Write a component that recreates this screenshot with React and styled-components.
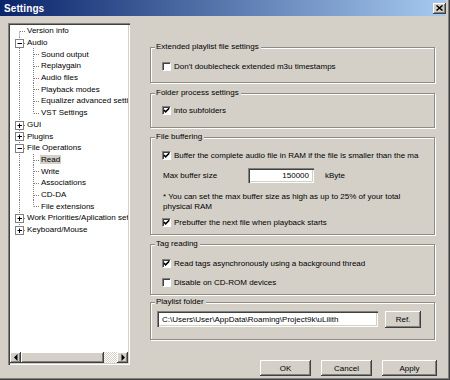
import React from 'react';
import styled, { createGlobalStyle } from 'styled-components';

const FONT = `"Liberation Sans", Arial, sans-serif`;

const Global = createGlobalStyle`
  html, body { margin: 0; padding: 0; background: #d4d0c8; }
  body { font-family: ${FONT}; }
  * { box-sizing: border-box; }
`;

const Window = styled.div`
  width: 450px;
  height: 380px;
  background: #d4d0c8;
  box-shadow: inset -1px -1px 0 #404040, inset -2px -2px 0 #808080;
  display: flex;
  flex-direction: column;
  overflow: hidden;
  font-family: ${FONT};
  font-size: 8px;
  color: #000;
`;

const TitleBar = styled.div`
  height: 16px;
  width: 446px;
  flex: none;
  display: flex;
  align-items: center;
  justify-content: space-between;
  padding: 0 0 0 4px;
  background: linear-gradient(to right, #0a246a, #a6caf0);
`;

const Title = styled.span`
  color: #fff;
  font-weight: bold;
  font-size: 10px;
  letter-spacing: 0.1px;
`;

const CloseBtn = styled.div`
  width: 13px;
  height: 11px;
  background: #d4d0c8;
  box-shadow: inset -1px -1px 0 #404040, inset 1px 1px 0 #fff, inset -2px -2px 0 #808080;
  display: flex;
  align-items: center;
  justify-content: center;
`;

const Body = styled.div`
  flex: 1;
  display: flex;
  padding: 7px 0 0 8px;
`;

const TreeBox = styled.div`
  width: 122px;
  height: 342px;
  flex: none;
  background: #fff;
  padding: 2px;
  box-shadow: inset 1px 1px 0 #808080, inset 2px 2px 0 #404040, inset -1px -1px 0 #fff, inset -2px -2px 0 #d4d0c8;
  display: flex;
  flex-direction: column;
`;

const TreeList = styled.div`
  flex: 1;
  overflow: hidden;
  display: flex;
  flex-direction: column;
`;

const TreeRow = styled.div`
  height: 11.7px;
  display: flex;
  align-items: center;
  white-space: nowrap;
  flex: none;
`;

const TreeLabel = styled.span`
  padding: 0 1px;
  line-height: 9px;
  height: 9px;
  background: ${(p) => (p.$selected ? '#d4d0c8' : 'transparent')};
`;

const HScroll = styled.div`
  height: 11px;
  flex: none;
  display: flex;
`;

const raised = `
  background: #d4d0c8;
  box-shadow: inset -1px -1px 0 #404040, inset 1px 1px 0 #fff, inset -2px -2px 0 #808080;
`;

const ScrollBtn = styled.div`
  width: 11px;
  height: 11px;
  flex: none;
  ${raised}
  display: flex;
  align-items: center;
  justify-content: center;
`;

const Thumb = styled.div`
  width: 83px;
  height: 11px;
  flex: none;
  ${raised}
`;

const Track = styled.div`
  flex: 1;
  background-color: #d4d0c8;
  background-image: conic-gradient(#fff 25%, #d4d0c8 0 50%, #fff 0 75%, #d4d0c8 0);
  background-size: 2px 2px;
`;

const RightCol = styled.div`
  width: 285px;
  margin-left: 20px;
  display: flex;
  flex-direction: column;
`;

const GroupBox = styled.div`
  position: relative;
  height: ${(p) => p.$h}px;
  margin-top: ${(p) => p.$mt}px;
  padding: ${(p) => p.$pt || 0}px 0 0 11px;
  border: 1px solid #8f8c86;
  box-shadow: inset 1px 1px 0 #fff, 1px 1px 0 #fff;
  display: flex;
  flex-direction: column;
  flex: none;
`;

const Legend = styled.span`
  position: absolute;
  top: -6px;
  left: 4px;
  padding: 0 2px 0 1px;
  line-height: 10px;
  background: #d4d0c8;
  white-space: nowrap;
`;

const CheckRow = styled.div`
  display: flex;
  align-items: center;
  gap: 3px;
  height: ${(p) => p.$h || 10}px;
  margin-top: ${(p) => p.$mt || 0}px;
  white-space: nowrap;
  overflow: hidden;
  max-width: 260px;
  flex: none;
`;

const CheckBox = styled.span`
  width: 9px;
  height: 9px;
  flex: none;
  background: #fff;
  border-top: 1px solid #808080;
  border-left: 1px solid #808080;
  border-right: 1px solid #fff;
  border-bottom: 1px solid #fff;
  box-shadow: inset 1px 1px 0 #404040;
  display: flex;
`;

const FieldRow = styled.div`
  display: flex;
  align-items: center;
  height: 15px;
  margin-top: ${(p) => p.$mt || 0}px;
  flex: none;
`;

const FieldLabel = styled.span`
  width: 86px;
  flex: none;
  padding-left: 1px;
`;

const sunken = `
  background: #fff;
  box-shadow: inset 1px 1px 0 #808080, inset 2px 2px 0 #404040, inset -1px -1px 0 #fff, inset -2px -2px 0 #d4d0c8;
`;

const TextInput = styled.div`
  width: ${(p) => p.$w}px;
  height: ${(p) => p.$h || 15}px;
  flex: none;
  ${sunken}
  display: flex;
  align-items: center;
  justify-content: ${(p) => (p.$right ? 'flex-end' : 'flex-start')};
  padding: 0 5px 0 5px;
  white-space: nowrap;
  overflow: hidden;
`;

const Unit = styled.span`
  margin-left: 11px;
`;

const Note = styled.div`
  margin-top: 9px;
  line-height: 9.5px;
  padding-left: 1px;
  width: 260px;
  flex: none;
`;

const PathRow = styled.div`
  display: flex;
  align-items: flex-start;
  padding: 8px 0 0 0;
  margin-left: -5px;
  gap: 7px;
`;

const Button = styled.div`
  width: ${(p) => p.$w || 51}px;
  height: ${(p) => p.$h || 16}px;
  flex: none;
  ${raised}
  display: flex;
  align-items: center;
  justify-content: center;
  font-size: 8px;
`;

const ButtonRow = styled.div`
  display: flex;
  gap: 10px;
  padding-left: 110px;
  margin-top: 20px;
`;

const CheckMark = () => (
  <svg width="7" height="7" viewBox="0 0 7 7">
    <path d="M0.8 3 L2.6 4.8 L6.2 1.2" fill="none" stroke="#000" strokeWidth="1.6" />
  </svg>
);

const Check = ({ checked, children, ...rest }) => (
  <CheckRow {...rest}>
    <CheckBox>{checked && <CheckMark />}</CheckBox>
    <span>{children}</span>
  </CheckRow>
);

const H = 11.7;
const dot = { stroke: '#808080', strokeWidth: 1, strokeDasharray: '1 1', fill: 'none' };

const Connector = ({ level, box, first, last, childLast }) => {
  const cy = 6.5;
  if (level === 0) {
    return (
      <svg width="16" height={H} style={{ flex: 'none', display: 'block' }}>
        <line x1="9.5" y1={first ? cy : 0} x2="9.5" y2={last ? cy : H} {...dot} />
        <line x1={box ? 14 : 10} y1={cy} x2="16" y2={cy} {...dot} />
        {box && (
          <g>
            <rect x="5.5" y={cy - 4} width="8" height="8" fill="#fff" stroke="#808080" strokeWidth="1" />
            <line x1="7.5" y1={cy} x2="12" y2={cy} stroke="#000" strokeWidth="1" />
            {box === 'plus' && <line x1="9.5" y1={cy - 2} x2="9.5" y2={cy + 2.5} stroke="#000" strokeWidth="1" />}
          </g>
        )}
      </svg>
    );
  }
  return (
    <svg width="30" height={H} style={{ flex: 'none', display: 'block' }}>
      <line x1="9.5" y1="0" x2="9.5" y2={H} {...dot} />
      <line x1="23.5" y1="0" x2="23.5" y2={childLast ? cy : H} {...dot} />
      <line x1="24" y1={cy} x2="30" y2={cy} {...dot} />
    </svg>
  );
};

const tree = [
  { label: 'Version info', level: 0, first: true },
  { label: 'Audio', level: 0, box: 'minus' },
  { label: 'Sound output', level: 1 },
  { label: 'Replaygain', level: 1 },
  { label: 'Audio files', level: 1 },
  { label: 'Playback modes', level: 1 },
  { label: 'Equalizer advanced settings', level: 1 },
  { label: 'VST Settings', level: 1, childLast: true },
  { label: 'GUI', level: 0, box: 'plus' },
  { label: 'Plugins', level: 0, box: 'plus' },
  { label: 'File Operations', level: 0, box: 'minus' },
  { label: 'Read', level: 1, selected: true },
  { label: 'Write', level: 1 },
  { label: 'Associations', level: 1 },
  { label: 'CD-DA', level: 1 },
  { label: 'File extensions', level: 1, childLast: true },
  { label: 'Work Priorities/Aplication settings', level: 0, box: 'plus' },
  { label: 'Keyboard/Mouse', level: 0, box: 'plus', last: true },
];

const Tri = ({ dir }) => (
  <svg width="4" height="7" viewBox="0 0 4 7">
    {dir === 'left' ? <path d="M3.5 0 L0 3.5 L3.5 7 Z" fill="#000" /> : <path d="M0.5 0 L4 3.5 L0.5 7 Z" fill="#000" />}
  </svg>
);

export default function App() {
  return (
    <>
      <Global />
      <Window>
        <TitleBar>
          <Title>Settings</Title>
          <CloseBtn>
            <svg width="7" height="6" viewBox="0 0 7 6">
              <path d="M0.5 0.5 L6.5 5.5 M6.5 0.5 L0.5 5.5" stroke="#000" strokeWidth="1.5" />
            </svg>
          </CloseBtn>
        </TitleBar>
        <Body>
          <TreeBox>
            <TreeList>
              {tree.map((t) => (
                <TreeRow key={t.label}>
                  <Connector {...t} />
                  <TreeLabel $selected={t.selected}>{t.label}</TreeLabel>
                </TreeRow>
              ))}
            </TreeList>
            <HScroll>
              <ScrollBtn><Tri dir="left" /></ScrollBtn>
              <Thumb />
              <Track />
              <ScrollBtn><Tri dir="right" /></ScrollBtn>
            </HScroll>
          </TreeBox>
          <RightCol>
            <GroupBox $mt={24} $h={36} $pt={13}>
              <Legend>Extended playlist file settings</Legend>
              <Check>Don't doublecheck extended m3u timestamps</Check>
            </GroupBox>
            <GroupBox $mt={10} $h={35} $pt={11}>
              <Legend>Folder process settings</Legend>
              <Check checked>into subfolders</Check>
            </GroupBox>
            <GroupBox $mt={9} $h={98} $pt={12}>
              <Legend>File buffering</Legend>
              <Check checked>Buffer the complete audio file in RAM if the file is smaller than the ma</Check>
              <FieldRow $mt={8}>
                <FieldLabel>Max buffer size</FieldLabel>
                <TextInput $w={66} $right>150000</TextInput>
                <Unit>kByte</Unit>
              </FieldRow>
              <Note>
                * You can set the max buffer size as high as up to 25% of your total
                <br />
                physical RAM
              </Note>
              <Check checked $mt={6}>Prebuffer the next file when playback starts</Check>
            </GroupBox>
            <GroupBox $mt={9} $h={51} $pt={13}>
              <Legend>Tag reading</Legend>
              <Check checked $h={11}>Read tags asynchronously using a background thread</Check>
              <Check $mt={8} $h={11}>Disable on CD-ROM devices</Check>
            </GroupBox>
            <GroupBox $mt={7} $h={38}>
              <Legend>Playlist folder</Legend>
              <PathRow>
                <TextInput $w={221} $h={16}>C:\Users\User\AppData\Roaming\Project9k\uLilith</TextInput>
                <Button $w={36} $h={17}>Ref.</Button>
              </PathRow>
            </GroupBox>
            <ButtonRow>
              <Button>OK</Button>
              <Button>Cancel</Button>
              <Button $w={55}>Apply</Button>
            </ButtonRow>
          </RightCol>
        </Body>
      </Window>
    </>
  );
}
